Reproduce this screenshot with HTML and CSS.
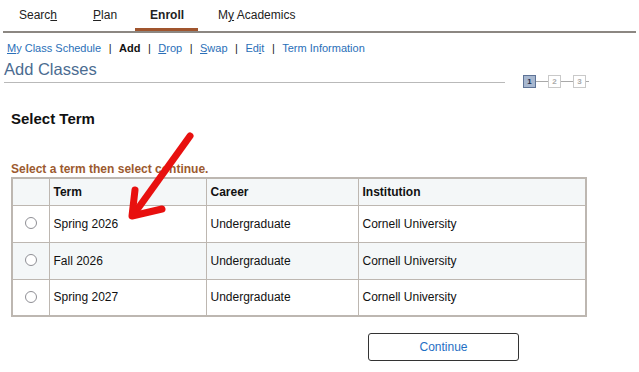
FILE: index.html
```html
<!DOCTYPE html>
<html>
<head>
<meta charset="utf-8">
<link rel="stylesheet" href="styles.css">
</head>
<body>
<div class="page">
  <nav class="tabs">
    <span class="tab">Searc<u>h</u></span>
    <span class="tab"><u>P</u>lan</span>
    <span class="tab active">Enroll</span>
    <span class="tab">M<u>y</u> Academics</span>
  </nav>
  <div class="subnav">
    <a class="lnk"><u>M</u>y Class Schedule</a><span class="sep">|</span><span class="cur">Add</span><span class="sep">|</span><a class="lnk"><u>D</u>rop</a><span class="sep">|</span><a class="lnk"><u>S</u>wap</a><span class="sep">|</span><a class="lnk">Ed<u>i</u>t</a><span class="sep">|</span><a class="lnk">Term Information</a>
  </div>
  <div class="titlerow">
    <h1 class="title">Add Classes</h1>
    <div class="steps">
      <span class="step on">1</span><span class="conn"></span><span class="step">2</span><span class="conn"></span><span class="step">3</span><span class="stub"></span>
    </div>
  </div>
  <div class="content">
    <h2 class="heading">Select Term</h2>
    <p class="instr">Select a term then select continue.</p>
    <table class="grid">
      <thead>
        <tr><th class="c0"></th><th class="c1">Term</th><th class="c2">Career</th><th class="c3">Institution</th></tr>
      </thead>
      <tbody>
        <tr><td class="c0"><span class="radio"></span></td><td>Spring 2026</td><td>Undergraduate</td><td>Cornell University</td></tr>
        <tr class="alt"><td class="c0"><span class="radio"></span></td><td>Fall 2026</td><td>Undergraduate</td><td>Cornell University</td></tr>
        <tr><td class="c0"><span class="radio"></span></td><td>Spring 2027</td><td>Undergraduate</td><td>Cornell University</td></tr>
      </tbody>
    </table>
    <div class="actions">
      <button class="btn">Continue</button>
    </div>
  </div>
  <svg class="arrow" width="100" height="100" viewBox="0 0 100 100">
    <g stroke="#e8100f" stroke-width="7" stroke-linecap="round" stroke-linejoin="round" fill="none">
      <path d="M80 6 L24 84"/>
      <path d="M25 60 L22 86 L52 79"/>
    </g>
  </svg>
</div>
</body>
</html>
```

FILE: styles.css
```css
* { box-sizing: border-box; }
body {
  margin: 0;
  font-family: "Liberation Sans", Arial, sans-serif;
  color: #000;
  background: #fff;
}
.page {
  position: relative;
  width: 639px;
  height: 372px;
  overflow: hidden;
}
.tabs {
  display: flex;
  margin: 0 3px;
  height: 33px;
  border-bottom: 2px solid #8c8782;
}
.tab {
  font-size: 12px;
  color: #222;
  padding: 8px 0 0;
  height: 31px;
}
.tab:nth-child(1) { margin-left: 16px; }
.tab:nth-child(2) { margin-left: 36px; }
.tab.active {
  font-weight: bold;
  border-bottom: 3px solid #a0552e;
  margin-left: 18px;
  padding: 8px 14px 0 15px;
}
.tab:nth-child(4) { margin-left: 20px; }
.tab u { text-decoration: underline; }
.subnav {
  font-size: 11px;
  padding: 8px 0 0 7px;
  line-height: 14px;
  height: 22px;
}
.lnk { color: #2a6fb8; text-decoration: none; }
.lnk u { text-decoration: underline; }
.sep { color: #222; margin: 0 7.5px; }
.cur { font-weight: bold; color: #111; }
.titlerow {
  display: flex;
  align-items: flex-end;
  padding-left: 4px;
}
.title {
  flex: 0 0 501px;
  margin: 0;
  font-size: 16.5px;
  font-weight: normal;
  color: #4b6c91;
  line-height: 20px;
  padding-top: 4px;
  border-bottom: 1px solid #b9b9b9;
  height: 28px;
}
.steps {
  display: flex;
  align-items: center;
  margin-left: 18px;
  margin-bottom: -5px;
}
.step {
  width: 13px;
  height: 13px;
  border: 1px solid #c9c9c9;
  font-size: 8px;
  line-height: 11px;
  text-align: center;
  color: #aaa;
  background: #fff;
  font-weight: bold;
}
.step.on {
  background: #a8b8d0;
  border-color: #5e7396;
  color: #1e2c4a;
}
.conn { width: 12px; height: 1px; background: #a9a9a9; }
.stub { width: 3px; height: 1px; background: #a9a9a9; }
.content { padding-left: 11px; }
.heading {
  margin: 26px 0 0;
  font-size: 15px;
  font-weight: bold;
  line-height: 20px;
  color: #111;
}
.instr {
  margin: 33px 0 0;
  font-size: 12px;
  font-weight: bold;
  color: #9c5a2f;
  line-height: 14px;
}
.grid {
  margin-top: 1px;
  border-collapse: collapse;
  border: 2px solid #bdb7b1;
  width: 576px;
  font-size: 12px;
}
.grid th, .grid td {
  border: 1px solid #bdb7b1;
  text-align: left;
  padding: 0 0 0 4px;
}
.grid th {
  height: 27px;
  font-weight: bold;
  background: #f4f7f8;
  color: #111;
}
.grid td { height: 37px; color: #111; }
.grid tr.alt td { background: #f4f7f8; }
.c0 { width: 37px; }
.c1 { width: 157px; }
.c2 { width: 152px; }
.grid td.c0 { padding: 0; text-align: center; vertical-align: top; }
.radio {
  display: inline-block;
  width: 12px;
  height: 12px;
  border: 1px solid #8f8f95;
  border-radius: 50%;
  background: #fff;
  margin-top: 11px;
  margin-left: 1px;
}
.actions {
  padding: 16px 0 0 357px;
}
.btn {
  width: 151px;
  height: 28px;
  background: #fff;
  border: 1px solid #333;
  border-radius: 3px;
  font-family: "Liberation Sans", Arial, sans-serif;
  font-size: 12px;
  color: #1f6fc4;
  padding: 0;
}
.arrow {
  position: absolute;
  left: 110px;
  top: 130px;
}
```
